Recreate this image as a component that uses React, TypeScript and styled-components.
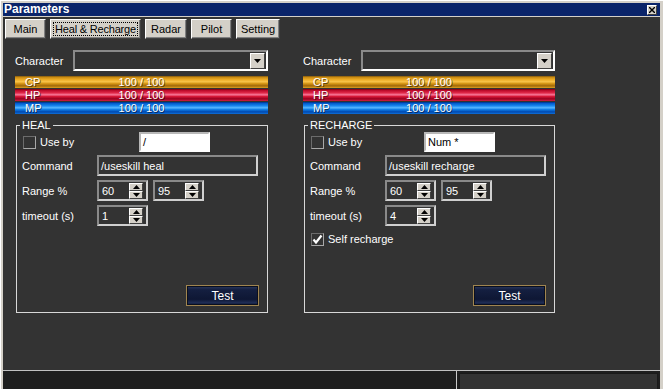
import React from 'react';
import styled, { createGlobalStyle } from 'styled-components';

const Global = createGlobalStyle`
  html, body { margin: 0; padding: 0; background: #d4d0c8; overflow: hidden; }
  body { font-family: 'Liberation Sans', Arial, sans-serif; font-size: 11px; }
`;

const Window = styled.div`
  width: 663px;
  height: 389px;
  box-sizing: border-box;
  padding: 3px 3px 0 3px;
  background: #d4d0c8;
  box-shadow: inset 1px 1px 0 #ffffff;
  display: flex;
  flex-direction: column;
`;

const TitleBar = styled.div`
  height: 13px;
  flex: none;
  background: #0a246a;
  display: flex;
  align-items: center;
  justify-content: space-between;
  padding: 0 3px 0 1px;
`;

const Title = styled.span`
  color: #fff;
  font-weight: bold;
  font-size: 12px;
  line-height: 13px;
`;

const CloseButton = styled.div`
  width: 10px;
  height: 10px;
  box-sizing: border-box;
  background: #d4d0c8;
  border: 1px solid;
  border-color: #fff #404040 #404040 #fff;
  display: flex;
  align-items: center;
  justify-content: center;
`;

const Body = styled.div`
  flex: 1;
  background: #333333;
  border-top: 1px solid #d4d0c8;
  padding: 2px 0 0 2px;
  display: flex;
  flex-direction: column;
  color: #fff;
`;

const TabRow = styled.div`
  display: flex;
  gap: 4px;
`;

const Tab = styled.div<{ $w: number; $active?: boolean }>`
  width: ${p => p.$w}px;
  height: 20px;
  box-sizing: border-box;
  background: #d4d0c8;
  color: #000;
  border: 1px solid;
  border-color: #fff #404040 #404040 #fff;
  box-shadow: inset -1px -1px 0 #808080;
  display: flex;
  align-items: center;
  justify-content: center;
  font-size: 11px;
  white-space: nowrap;
  letter-spacing: ${p => (p.$active ? '-0.2px' : '0')};
  outline: ${p => (p.$active ? '1px dotted #000' : 'none')};
  outline-offset: -4px;
`;

const Columns = styled.div`
  display: flex;
  gap: 35px;
  margin: 11px 0 0 10px;
`;

const Column = styled.div<{ $w: number }>`
  width: ${p => p.$w}px;
  display: flex;
  flex-direction: column;
`;

const CharRow = styled.div`
  display: flex;
  align-items: center;
  height: 21px;
`;

const CharLabel = styled.span`
  width: 58px;
  flex: none;
`;

const Dropdown = styled.div`
  flex: 1;
  height: 21px;
  box-sizing: border-box;
  border: 2px solid;
  border-color: #8a8a8a #ffffff #ffffff #8a8a8a;
  background: #333;
  display: flex;
  align-items: center;
  justify-content: flex-end;
  padding-right: 1px;
`;

const DropButton = styled.div`
  width: 15px;
  height: 16px;
  box-sizing: border-box;
  background: #d4d0c8;
  border: 1px solid;
  border-color: #fff #404040 #404040 #fff;
  display: flex;
  align-items: center;
  justify-content: center;
`;

const Bars = styled.div`
  margin-top: 5px;
  display: flex;
  flex-direction: column;
  gap: 1px;
`;

const barGradients: Record<string, string> = {
  CP: 'linear-gradient(to bottom, #7a5210 0%, #c88a10 10%, #eeac26 30%, #f8c44a 48%, #d89818 62%, #a06808 82%, #e0a020 100%)',
  HP: 'linear-gradient(to bottom, #6a0010 0%, #b80828 10%, #e02848 32%, #f87898 48%, #d81838 62%, #980020 82%, #d02040 100%)',
  MP: 'linear-gradient(to bottom, #002a80 0%, #0058c8 10%, #1888f0 32%, #58b8ff 48%, #1080e8 62%, #0048b0 82%, #1070d8 100%)',
};

const Bar = styled.div<{ $kind: string }>`
  height: 12px;
  background: ${p => barGradients[p.$kind]};
  display: grid;
  grid-template-columns: 1fr auto 1fr;
  align-items: center;
  font-size: 11px;
  line-height: 12px;
  color: #fff;
  text-shadow: 1px 1px 0 rgba(0, 0, 0, 0.55);
`;

const BarLabel = styled.span`
  padding-left: 10px;
`;

const Group = styled.section`
  margin: 11px 0 0 1px;
  height: 188px;
  box-sizing: border-box;
  border: 1px solid #d8d8d8;
  display: flex;
  flex-direction: column;
`;

const Legend = styled.span`
  align-self: flex-start;
  margin: -7px 0 0 3px;
  padding: 0 2px;
  background: #333;
  font-size: 11px;
  line-height: 13px;
  color: #fff;
`;

const UseRow = styled.div<{ $lead: number }>`
  display: grid;
  grid-template-columns: ${p => p.$lead}px 71px;
  align-items: center;
  height: 20px;
  padding-left: 6px;
`;

const CheckWrap = styled.label`
  display: flex;
  align-items: center;
  gap: 4px;
  color: #fff;
`;

const Check = styled.span`
  width: 13px;
  height: 13px;
  box-sizing: border-box;
  background: #333;
  border: 1px solid;
  border-color: #6c6c6c #a8a8a8 #a8a8a8 #6c6c6c;
  display: flex;
  align-items: center;
  justify-content: center;
  flex: none;
`;

const FieldRow = styled.div`
  display: grid;
  grid-template-columns: 75px auto;
  align-items: center;
  padding-left: 5px;
  margin-top: 4px;
`;

const FirstFieldRow = styled(FieldRow)`
  margin-top: 3px;
`;

const Field = styled.div<{ $light?: boolean; $w: number; $h?: number }>`
  box-sizing: border-box;
  width: ${p => p.$w}px;
  height: ${p => p.$h ?? 21}px;
  padding-left: 2px;
  background: ${p => (p.$light ? '#fff' : '#333')};
  color: ${p => (p.$light ? '#000' : '#fff')};
  border: 2px solid;
  border-color: ${p => (p.$light ? '#b8b8b8 #fff #fff #b8b8b8' : '#8a8a8a #d0d0d0 #d0d0d0 #8a8a8a')};
  display: flex;
  align-items: center;
  white-space: nowrap;
  font-size: 11px;
`;

const Spinners = styled.div`
  display: flex;
  gap: 5px;
`;

const SpinValue = styled.span`
  flex: 1;
  padding-left: 1px;
`;

const SpinButtons = styled.div`
  width: 14px;
  height: 16px;
  margin-right: 3px;
  display: flex;
  flex-direction: column;
`;

const SpinBtn = styled.div`
  flex: 1;
  box-sizing: border-box;
  background: #d4d0c8;
  border: 1px solid;
  border-color: #fff #404040 #404040 #fff;
  display: flex;
  align-items: center;
  justify-content: center;
`;

const SelfRow = styled.div`
  display: flex;
  align-items: center;
  height: 16px;
  margin-top: 5px;
  padding-left: 6px;
`;

const TestButton = styled.div`
  align-self: flex-end;
  margin: auto 8px 6px 0;
  width: 73px;
  height: 21px;
  box-sizing: border-box;
  border: 1px solid #a08550;
  box-shadow: inset 0 0 0 1px #0a0f1e;
  background: linear-gradient(to bottom, #2c3a60 0%, #141f40 20%, #0e1734 70%, #1f2d55 88%, #0e1734 100%);
  color: #fff;
  font-size: 12px;
  display: flex;
  align-items: center;
  justify-content: center;
`;

const StatusBar = styled.div`
  height: 18px;
  flex: none;
  border-top: 1px solid #c0c0c0;
  display: flex;
`;

const StatusMain = styled.div`
  flex: 1;
  background: #1e1e1e;
`;

const StatusSide = styled.div`
  width: 199px;
  background: #1e1e1e;
  border-left: 1px solid #c8c8c8;
  padding: 2px 2px 0 2px;
  display: flex;
`;

const StatusInset = styled.div`
  flex: 1;
  background: #333;
  border: 1px solid #1a1a1a;
  border-bottom: none;
`;

const TriUp = () => (
  <svg width="7" height="4" viewBox="0 0 7 4"><path d="M3.5 0 L7 4 L0 4 Z" fill="#000" /></svg>
);
const TriDown = () => (
  <svg width="7" height="4" viewBox="0 0 7 4"><path d="M0 0 L7 0 L3.5 4 Z" fill="#000" /></svg>
);

const Spinner: React.FC<{ value: string }> = ({ value }) => (
  <Field $w={51}>
    <SpinValue>{value}</SpinValue>
    <SpinButtons>
      <SpinBtn><TriUp /></SpinBtn>
      <SpinBtn><TriDown /></SpinBtn>
    </SpinButtons>
  </Field>
);

const Tick = () => (
  <svg width="11" height="11" viewBox="0 0 11 11">
    <path d="M1.5 5.5 L4 8.5 L9.5 1.5" stroke="#fff" strokeWidth="2.2" fill="none" />
  </svg>
);

interface PanelProps {
  width: number;
  title: string;
  lead: number;
  key1: string;
  command: string;
  timeout: string;
  selfRecharge?: boolean;
}

const Panel: React.FC<PanelProps> = ({ width, title, lead, key1, command, timeout, selfRecharge }) => (
  <Column $w={width}>
    <CharRow>
      <CharLabel>Character</CharLabel>
      <Dropdown>
        <DropButton><TriDown /></DropButton>
      </Dropdown>
    </CharRow>
    <Bars>
      {['CP', 'HP', 'MP'].map(k => (
        <Bar key={k} $kind={k}>
          <BarLabel>{k}</BarLabel>
          <span>100 / 100</span>
          <span />
        </Bar>
      ))}
    </Bars>
    <Group>
      <Legend>{title}</Legend>
      <UseRow $lead={lead}>
        <CheckWrap><Check />Use by</CheckWrap>
        <Field $light $w={71} $h={20}>{key1}</Field>
      </UseRow>
      <FirstFieldRow>
        <span>Command</span>
        <Field $w={161}>{command}</Field>
      </FirstFieldRow>
      <FieldRow>
        <span>Range %</span>
        <Spinners>
          <Spinner value="60" />
          <Spinner value="95" />
        </Spinners>
      </FieldRow>
      <FieldRow>
        <span>timeout (s)</span>
        <Spinner value={timeout} />
      </FieldRow>
      {selfRecharge && (
        <SelfRow>
          <CheckWrap><Check><Tick /></Check>Self recharge</CheckWrap>
        </SelfRow>
      )}
      <TestButton>Test</TestButton>
    </Group>
  </Column>
);

export default function App() {
  return (
    <>
      <Global />
      <Window>
        <TitleBar>
          <Title>Parameters</Title>
          <CloseButton>
            <svg width="6" height="6" viewBox="0 0 6 6">
              <path d="M0 0 L6 6 M6 0 L0 6" stroke="#000" strokeWidth="1.4" />
            </svg>
          </CloseButton>
        </TitleBar>
        <Body>
          <TabRow>
            <Tab $w={41}>Main</Tab>
            <Tab $w={91} $active>Heal &amp; Recharge</Tab>
            <Tab $w={42}>Radar</Tab>
            <Tab $w={41}>Pilot</Tab>
            <Tab $w={44}>Setting</Tab>
          </TabRow>
          <Columns>
            <Panel width={253} title="HEAL" lead={116} key1="/" command="/useskill heal" timeout="1" />
            <Panel width={252} title="RECHARGE" lead={113} key1="Num *" command="/useskill recharge" timeout="4" selfRecharge />
          </Columns>
        </Body>
        <StatusBar>
          <StatusMain />
          <StatusSide>
            <StatusInset />
          </StatusSide>
        </StatusBar>
      </Window>
    </>
  );
}
